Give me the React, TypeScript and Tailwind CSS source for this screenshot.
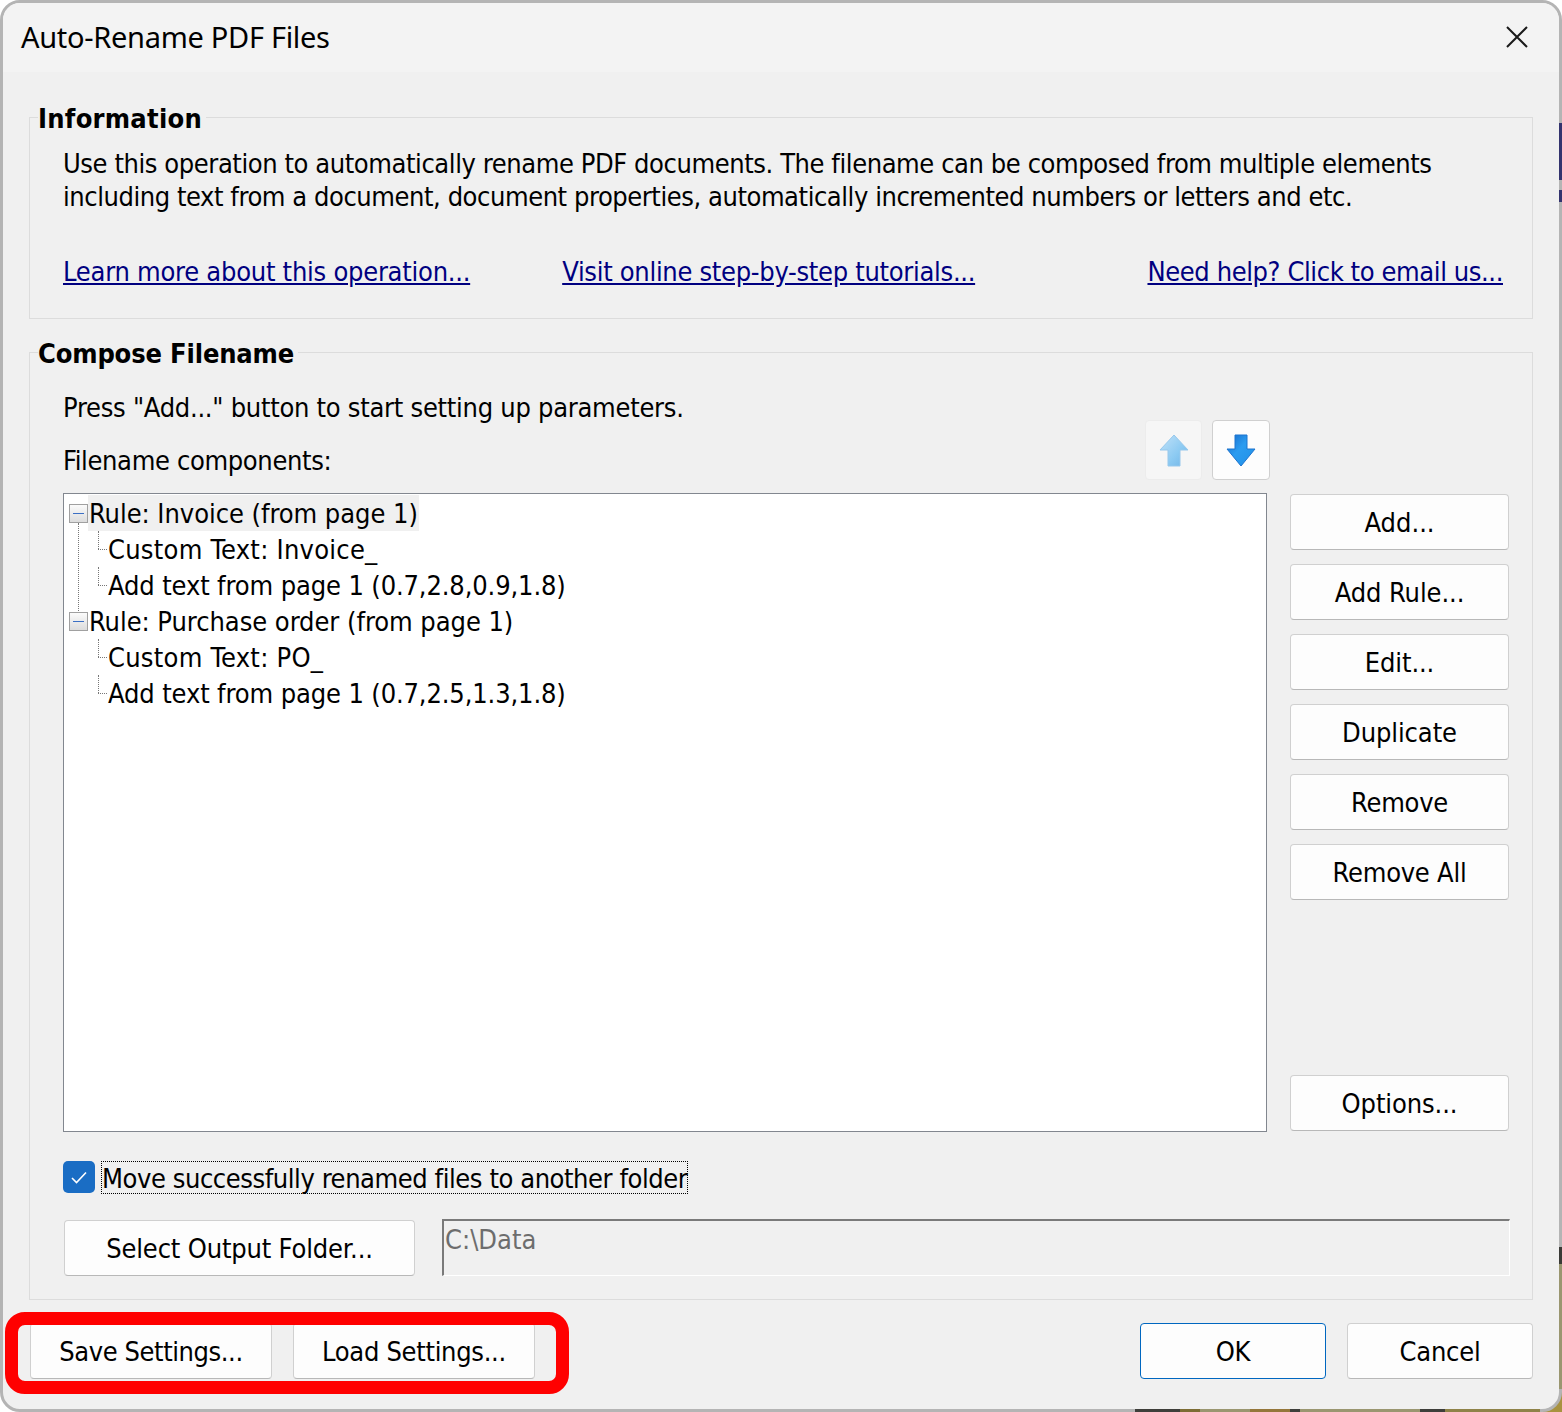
const font = "font-['DejaVu_Sans_Condensed','DejaVu_Sans',sans-serif]";

function Btn({ label, className = "", primary, tracking = "tracking-[-0.25px]" }: { label: string; className?: string; primary?: boolean; tracking?: string }) {
  return (
    <button className={`h-14 pt-[2px] flex items-center justify-center bg-[#fdfdfd] border rounded-[4px] text-[27px] text-black ${tracking} ${primary ? "border-[#0067c0]" : "border-[#d0d0d0] border-b-[#b8b8b8]"} ${className}`}>
      {label}
    </button>
  );
}

function Box() {
  return (
    <span className="absolute left-[4px] top-[9px] w-[19px] h-[19px] border border-[#a0a0a0] bg-gradient-to-b from-[#fbfbfb] to-[#dcdcdc] flex items-center justify-center">
      <span className="w-[11px] h-px bg-[#3b6fc4]" />
    </span>
  );
}

function RuleRow({ label, active, line }: { label: string; active?: boolean; line?: boolean }) {
  return (
    <div className="relative h-9 pl-[23px] tracking-[-0.05px]">
      <Box />
      {line && <span className="absolute left-[13px] top-[28px] h-[90px] border-l border-dotted border-[#777]" />}
      <div className={`h-9 w-fit pl-[1px] pr-[1px] leading-[38px] ${active ? "bg-[#f0f0f0]" : ""}`}>{label}</div>
    </div>
  );
}

function ChildRow({ label, wide }: { label: string; wide?: boolean }) {
  return (
    <div className={`relative h-9 pl-[43px] leading-[38px] ${wide ? "tracking-[0.25px]" : "tracking-[-0.13px]"}`}>
      <span className="absolute left-[33px] top-0 h-[18px] border-l border-dotted border-[#777]" />
      <span className="absolute left-[33px] top-[18px] w-[9px] border-t border-dotted border-[#777]" />
      {label}
    </div>
  );
}

export default function App() {
  return (
    <div className={`relative w-[1562px] h-[1412px] bg-white overflow-hidden ${font}`}>
      <div className="absolute right-0 bottom-0 w-6 h-6 bg-[#a8923f]" />
      <div className="relative w-[1562px] h-[1412px] border-[3px] border-[#b4b4b4] rounded-[20px] bg-[#f0f0f0] overflow-hidden text-black">
        <div className="h-[69px] bg-[#f3f3f3] flex items-center justify-between pl-[18px] pr-[29px]">
          <span className="font-['Noto_Sans',sans-serif] text-[29px] tracking-[-0.3px] -mt-[2px]">Auto-Rename PDF Files</span>
          <svg width="22" height="22" viewBox="0 0 22 22" className="mt-[-2px] mr-[2px]">
            <path d="M1 1 L21 21 M21 1 L1 21" stroke="#1a1a1a" strokeWidth="2" fill="none" />
          </svg>
        </div>

        <div className="pl-[26px] pr-[26px] pt-[45px] text-[27px]">
          <section className="h-[202px] border border-[#dcdcdc] pl-[33px] pr-[29px]">
            <h2 className="-mt-[18px] -ml-[25px] w-fit bg-[#f0f0f0] font-bold text-[27px] leading-[38px] tracking-[0.25px] pr-[4px]">Information</h2>
            <p className="mt-[9px] leading-[33px] whitespace-nowrap">
              <span className="tracking-[-0.42px]">Use this operation to automatically rename PDF documents. The filename can be composed from multiple elements</span>
              <br />
              <span className="tracking-[-0.44px]">including text from a document, document properties, automatically incremented numbers or letters and etc.</span>
            </p>
            <div className="mt-[42px] flex text-[#000080] underline leading-[33px]">
              <span className="tracking-[-0.25px]">Learn more about this operation...</span>
              <span className="tracking-[-0.3px] ml-[92px]">Visit online step-by-step tutorials...</span>
              <span className="tracking-[-0.4px] ml-auto">Need help? Click to email us...</span>
            </div>
          </section>

          <section className="mt-[33px] h-[948px] border border-[#dcdcdc] pl-[33px] pr-[23px]">
            <h2 className="-mt-[18px] -ml-[25px] w-fit bg-[#f0f0f0] font-bold text-[27px] leading-[38px] tracking-[-0.15px] pr-[4px]">Compose Filename</h2>
            <div className="mt-[18px] leading-[33px] tracking-[-0.27px]">Press "Add..." button to start setting up parameters.</div>
            <div className="flex items-end justify-between pr-[239px] -mt-[4px]">
              <div className="leading-[33px] tracking-[-0.35px] mb-[3px]">Filename components:</div>
              <div className="flex gap-[10px]">
                <button className="w-[57px] h-[60px] bg-[#f6f6f6] border border-[#ececec] rounded-[4px] flex items-center justify-center">
                  <svg width="30" height="33" viewBox="0 0 30 33">
                    <defs>
                      <linearGradient id="upg" x1="0" y1="0" x2="1" y2="1">
                        <stop offset="0" stopColor="#c2e2f8" />
                        <stop offset="0.6" stopColor="#8ccaf2" />
                        <stop offset="1" stopColor="#6fb3e6" />
                      </linearGradient>
                    </defs>
                    <path d="M15 1 L29 16 H21 V32 H9 V16 H1 Z" fill="url(#upg)" stroke="#97c8ec" strokeWidth="1" strokeLinejoin="round" />
                  </svg>
                </button>
                <button className="w-[58px] h-[60px] bg-[#fdfdfd] border border-[#d0d0d0] rounded-[4px] flex items-center justify-center">
                  <svg width="30" height="33" viewBox="0 0 30 33">
                    <defs>
                      <linearGradient id="dng" x1="0" y1="0" x2="1" y2="1">
                        <stop offset="0" stopColor="#1668c8" />
                        <stop offset="0.45" stopColor="#2b9cf0" />
                        <stop offset="1" stopColor="#1f8fe6" />
                      </linearGradient>
                    </defs>
                    <path d="M9 1 H21 V15 H29 L15 32 L1 15 H9 Z" fill="url(#dng)" stroke="#1d74cf" strokeWidth="1" strokeLinejoin="round" />
                  </svg>
                </button>
              </div>
            </div>

            <div className="mt-[13px] flex justify-between items-start">
              <div className="w-[1204px] h-[639px] border border-[#82878f] bg-white pt-[1px] pl-[1px] pr-[1px]">
                <RuleRow label="Rule: Invoice (from page 1)" active line />
                <ChildRow label="Custom Text: Invoice_" wide />
                <ChildRow label="Add text from page 1 (0.7,2.8,0.9,1.8)" />
                <RuleRow label="Rule: Purchase order (from page 1)" />
                <ChildRow label="Custom Text: PO_" wide />
                <ChildRow label="Add text from page 1 (0.7,2.5,1.3,1.8)" />
              </div>
              <div className="w-[219px] h-[637px] mt-px flex flex-col gap-[14px]">
                <Btn label="Add..." tracking="tracking-[0px]" />
                <Btn label="Add Rule..." tracking="tracking-[-0.1px]" />
                <Btn label="Edit..." tracking="tracking-[-0.1px]" />
                <Btn label="Duplicate" tracking="tracking-[-0.1px]" />
                <Btn label="Remove" />
                <Btn label="Remove All" />
                <Btn label="Options..." className="mt-auto" tracking="tracking-[-0.1px]" />
              </div>
            </div>

            <div className="mt-[29px] flex items-start h-[33px]">
              <span className="w-8 h-8 rounded-[5px] bg-[#1a6dc4] flex items-center justify-center">
                <svg width="16" height="13" viewBox="0 0 16 13">
                  <path d="M1 7 L5.5 11.5 L15 1.5" stroke="#fff" strokeWidth="1.6" fill="none" />
                </svg>
              </span>
              <span className="ml-[6px] h-[33px] leading-[33px] tracking-[-0.43px] border border-dotted border-black whitespace-nowrap">Move successfully renamed files to another folder</span>
            </div>

            <div className="mt-[26px] flex justify-between">
              <Btn label="Select Output Folder..." className="w-[351px] ml-px" tracking="tracking-[-0.17px]" />
              <div className="w-[1068px] h-[57px] -mt-px -mr-px border border-t-2 border-l-2 border-t-[#7a7a7a] border-l-[#7a7a7a] border-r-white border-b-white pl-[1px] text-[#6d6d6d] leading-[38px]">C:\Data</div>
            </div>
          </section>

          <div className="mt-[23px] flex">
            <Btn label="Save Settings..." className="w-[242px] ml-[1px]" tracking="tracking-[-0.42px]" />
            <Btn label="Load Settings..." className="w-[242px] ml-[21px]" tracking="tracking-[-0.3px]" />
            <Btn label="OK" primary className="w-[186px] ml-auto" />
            <Btn label="Cancel" className="w-[186px] ml-[21px]" />
          </div>
        </div>
      </div>

      <div className="absolute left-[5px] top-[1312px] w-[564px] h-[82px] border-[13px] border-[#ff0000] rounded-[20px]" />

      <div className="absolute right-0 top-[123px] w-[3px] h-[57px] bg-[#33336e]" />
      <div className="absolute right-0 top-[190px] w-[3px] h-[12px] bg-[#33336e]" />
      <div className="absolute right-0 top-[1247px] w-[3px] h-[17px] bg-[#3a3a36]" />
      <div className="absolute right-0 top-[1264px] w-[3px] h-[125px] bg-[#9a9670]" />
      <div className="absolute left-[1135px] bottom-0 w-[45px] h-[3px] bg-[#3e3e3a]" />
      <div className="absolute left-[1180px] bottom-0 w-[20px] h-[3px] bg-[#7c6c34]" />
      <div className="absolute left-[1200px] bottom-0 w-[50px] h-[3px] bg-[#9a9670]" />
      <div className="absolute left-[1250px] bottom-0 w-[40px] h-[3px] bg-[#94763a]" />
      <div className="absolute left-[1290px] bottom-0 w-[10px] h-[3px] bg-[#3e3e3a]" />
      <div className="absolute left-[1300px] bottom-0 w-[120px] h-[3px] bg-[#9a9670]" />
      <div className="absolute left-[1420px] bottom-0 w-[25px] h-[3px] bg-[#3e3e3a]" />
      <div className="absolute left-[1445px] bottom-0 w-[95px] h-[3px] bg-[#8e8248]" />
    </div>
  );
}
